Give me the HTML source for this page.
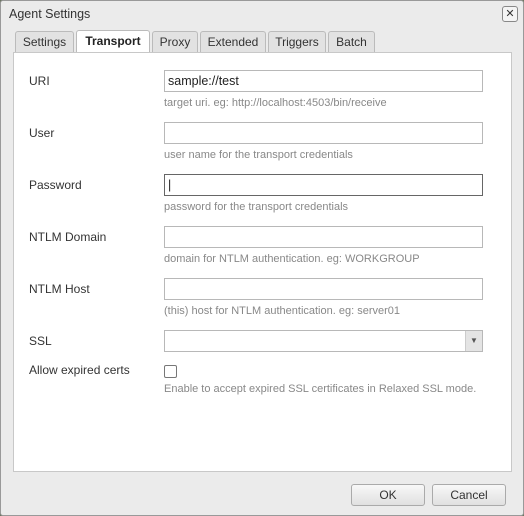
<!DOCTYPE html>
<html><head><style>
body{margin:0;width:524px;height:516px;overflow:hidden;background:#6b7560;font-family:"Liberation Sans",Arial,sans-serif;font-size:12px;color:#222}
.dlg{position:absolute;left:0;top:0;width:522px;height:514px;background:#ebebeb;border:1px solid #999;border-radius:3px}
.title{position:absolute;left:8px;top:6px;font-size:12.5px;color:#333}
.close{position:absolute;left:501px;top:5px;width:14px;height:14px;border:1px solid #888;border-radius:3px;background:#f4f4f4;font-size:11px;line-height:14px;text-align:center;color:#333}
.tab{position:absolute;top:30px;height:20px;border:1px solid #bbb;border-bottom:none;border-radius:3px 3px 0 0;background:#e2e2e2;font-size:12px;line-height:20px;text-align:center;color:#333}
.tab.a{background:#fff;font-weight:bold;height:22px;top:29px;color:#222}
.panel{position:absolute;left:12px;top:51px;width:497px;height:418px;background:#fff;border:1px solid #c8c8c8}
.lbl{position:absolute;left:28px;font-size:12px;color:#333}
.inp{position:absolute;left:163px;border:1px solid #b8b8b8;background:#fff;font-size:12.5px;line-height:20px;padding-left:3px;box-sizing:border-box;width:319px;height:22px}
.hlp{position:absolute;left:163px;font-size:11px;color:#888}
.btn{position:absolute;top:483px;height:20px;border:1px solid #aaa;border-radius:3px;background:linear-gradient(#f8f8f8,#e0e0e0);font-size:12px;line-height:20px;text-align:center;color:#333}
</style></head><body>
<div class="dlg">
<div class="title">Agent Settings</div>
<div class="close">✕</div>
<div class="tab" style="left:14px;width:57px">Settings</div>
<div class="tab a" style="left:75px;width:72px">Transport</div>
<div class="tab" style="left:151px;width:44px">Proxy</div>
<div class="tab" style="left:199px;width:64px">Extended</div>
<div class="tab" style="left:267px;width:56px">Triggers</div>
<div class="tab" style="left:327px;width:45px">Batch</div>
<div class="panel"></div>
<div class="lbl" style="top:73px">URI</div>
<div class="inp" style="top:69px">sample://test</div>
<div class="hlp" style="top:96px">target uri. eg: http://localhost:4503/bin/receive</div>
<div class="lbl" style="top:125px">User</div>
<div class="inp" style="top:121px"></div>
<div class="hlp" style="top:148px">user name for the transport credentials</div>
<div class="lbl" style="top:177px">Password</div>
<div class="inp" style="top:173px;border-color:#666">|</div>
<div class="hlp" style="top:200px">password for the transport credentials</div>
<div class="lbl" style="top:229px">NTLM Domain</div>
<div class="inp" style="top:225px"></div>
<div class="hlp" style="top:252px">domain for NTLM authentication. eg: WORKGROUP</div>
<div class="lbl" style="top:281px">NTLM Host</div>
<div class="inp" style="top:277px"></div>
<div class="hlp" style="top:304px">(this) host for NTLM authentication. eg: server01</div>
<div class="lbl" style="top:333px">SSL</div>
<div class="inp" style="top:329px"><div style="position:absolute;right:0;top:0;width:16px;height:20px;background:#e4e4e4;border-left:1px solid #ccc;font-size:8px;line-height:20px;text-align:center;color:#555">▼</div></div>
<div class="lbl" style="top:362px">Allow expired certs</div>
<div style="position:absolute;left:163px;top:364px;width:11px;height:11px;border:1px solid #777;border-radius:2px;background:#fff"></div>
<div class="hlp" style="top:382px">Enable to accept expired SSL certificates in Relaxed SSL mode.</div>
<div class="btn" style="left:350px;width:72px">OK</div>
<div class="btn" style="left:431px;width:72px">Cancel</div>
</div>
</body></html>
